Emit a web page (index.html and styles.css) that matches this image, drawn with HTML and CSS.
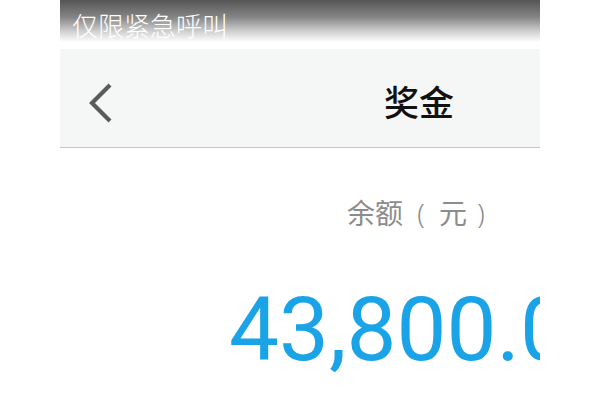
FILE: index.html
```html
<!DOCTYPE html>
<html lang="zh">
<head>
<meta charset="utf-8">
<link rel="stylesheet" href="styles.css">
</head>
<body>
<div class="screen">
  <div class="status">仅限紧急呼叫</div>
  <div class="header">
    <svg class="back" width="26" height="40" viewBox="0 0 26 40"><polyline points="22,2 4,20 22,38" fill="none" stroke="#5b5b5b" stroke-width="4.2"/></svg>
    <div class="title">奖金</div>
  </div>
  <div class="content">
    <div class="label">余额<span class="paren open">(</span>元<span class="paren close">)</span></div>
    <div class="amount">43,800.00</div>
  </div>
</div>
</body>
</html>
```
FILE: styles.css
```css
html, body { margin: 0; padding: 0; background: #fff; }
body { width: 600px; height: 400px; overflow: hidden; font-family: "Noto Sans CJK SC", "Noto Sans", sans-serif; }
.screen { width: 480px; height: 400px; margin-left: 60px; overflow: hidden; background: #fff; }
.status {
  height: 49px;
  box-sizing: border-box;
  padding-left: 12px;
  padding-top: 8px;
  font-size: 26px;
  line-height: 34px;
  color: #fff;
  font-weight: 300;
  background: linear-gradient(to bottom, #555 0%, #858585 35%, #d2d2d2 65%, #fff 86%, #fff 100%);
  white-space: nowrap;
}
.header {
  height: 99px;
  box-sizing: border-box;
  background: #f5f6f6;
  border-bottom: 1.5px solid #c4c4c4;
  display: flex;
  align-items: center;
  padding-left: 28px;
}
.back { display: block; margin-top: 9px; }
.title {
  margin-left: 270px;
  font-size: 35px;
  font-weight: 500;
  color: #111;
  margin-top: 4px;
}
.content { padding-left: 287px; }
.label {
  margin-top: 44px;
  font-size: 28px;
  line-height: 40px;
  color: #8c8c8c;
  white-space: nowrap;
}
.paren {
  display: inline-block;
  text-align: center;
  font-family: "Noto Sans", sans-serif;
  font-weight: 300;
  font-size: 27px;
}
.paren.open { width: 36px; }
.paren.close { width: 28px; }
.amount {
  margin-top: 46px;
  margin-left: -118px;
  font-family: Roboto, "Noto Sans", sans-serif;
  font-size: 89px;
  line-height: 100px;
  color: #1aa3e6;
  white-space: nowrap;
}
```
